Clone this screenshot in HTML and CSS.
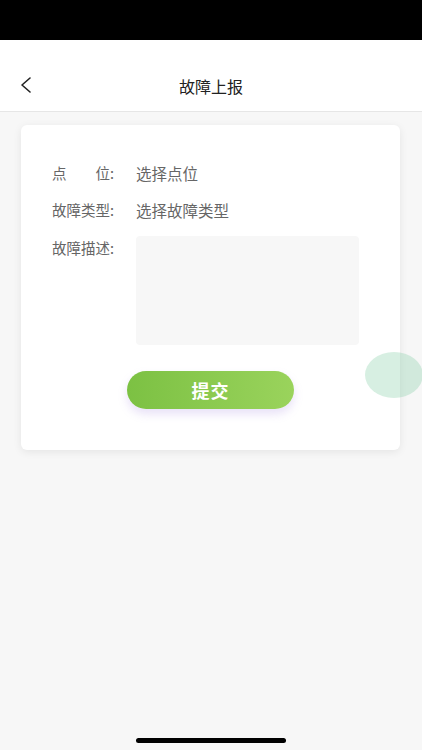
FILE: index.html
```html
<!DOCTYPE html>
<html lang="zh-CN">
<head>
    <meta charset="UTF-8">
    <meta name="viewport" content="width=device-width, initial-scale=1.0">
    <title>故障上报</title>
    <link rel="stylesheet" href="styles.css">
</head>
<body>

    <!-- Status bar -->
    <div class="status-bar"></div>

    <!-- Navigation header -->
    <div class="nav-bar">
        <span class="back-btn">
            <svg width="12" height="16" viewBox="0 0 12 16">
                <path d="M10 1 L2 8 L10 15" fill="none" stroke="#222" stroke-width="1.6" stroke-linecap="round" stroke-linejoin="round"/>
            </svg>
        </span>
        <h1 class="nav-title">故障上报</h1>
    </div>

    <!-- Report form -->
    <div class="report-card">
        <div class="form-row">
            <span class="form-label"><span class="label-text">点位</span>:</span>
            <span class="form-value">选择点位</span>
        </div>
        <div class="form-row">
            <span class="form-label"><span class="label-text">故障类型</span>:</span>
            <span class="form-value">选择故障类型</span>
        </div>
        <div class="form-row form-row-top">
            <span class="form-label"><span class="label-text">故障描述</span>:</span>
            <textarea class="form-textarea"></textarea>
        </div>
        <div class="submit-wrap">
            <button class="submit-btn" type="button">提交</button>
        </div>
    </div>

    <!-- Floating assistive button -->
    <div class="float-ball"></div>

    <div class="home-indicator"></div>

</body>
</html>
```

FILE: styles.css
```css
/* Basic Styling */
body {
    font-family: "Noto Sans CJK SC", "Noto Sans", sans-serif;
    background-color: #f7f7f7;
    margin: 0;
    padding: 0;
    height: 750px;
    overflow: hidden;
}

.status-bar {
    height: 40px;
    background-color: #000;
}

.nav-bar {
    height: 71px;
    background-color: #fff;
    border-bottom: 1px solid #e6e6e6;
    display: flex;
    justify-content: center;
    position: relative;
}

.back-btn {
    position: absolute;
    left: 20px;
    top: 37px;
    display: flex;
}

.nav-title {
    margin: 0;
    padding-top: 36px;
    font-size: 16px;
    font-weight: normal;
    color: #222;
    line-height: 20px;
}

.report-card {
    background-color: #fff;
    margin: 13px 22px 0 21px;
    border-radius: 6px;
    box-shadow: 0 2px 8px rgba(0, 0, 0, 0.08);
    padding: 37px 0 41px 31px;
}

.form-row {
    display: flex;
    align-items: center;
    height: 22px;
    margin-bottom: 15px;
    font-size: 14.5px;
    color: #666;
}

.form-row-top {
    align-items: flex-start;
    height: auto;
    margin-bottom: 26px;
}

.form-label {
    width: 84px;
    flex-shrink: 0;
    display: flex;
    line-height: 22px;
}

.form-row-top .form-label {
    padding-top: 1px;
}

.label-text {
    width: 58px;
    text-align: justify;
    text-align-last: justify;
}

.form-value {
    color: #666;
    font-size: 15.5px;
}

.form-textarea {
    width: 223px;
    height: 109px;
    box-sizing: border-box;
    border: none;
    border-radius: 4px;
    background-color: #f7f7f7;
    resize: none;
    outline: none;
    margin: 0;
}

.submit-wrap {
    display: flex;
    justify-content: center;
    padding-right: 31px;
}

.submit-btn {
    width: 167px;
    height: 38px;
    border: none;
    border-radius: 19px;
    background: linear-gradient(90deg, #7cc143, #9ad35c);
    color: #fff;
    font-family: inherit;
    font-size: 18px;
    font-weight: bold;
    letter-spacing: 1px;
    box-shadow: 0 5px 10px rgba(150, 120, 220, 0.22);
    cursor: pointer;
}

.float-ball {
    position: absolute;
    left: 365px;
    top: 352px;
    width: 58px;
    height: 46px;
    border-radius: 50%;
    background-color: rgba(130, 205, 165, 0.32);
}

.home-indicator {
    position: absolute;
    left: 136px;
    top: 738px;
    width: 150px;
    height: 5px;
    border-radius: 3px;
    background-color: #000;
}
```
